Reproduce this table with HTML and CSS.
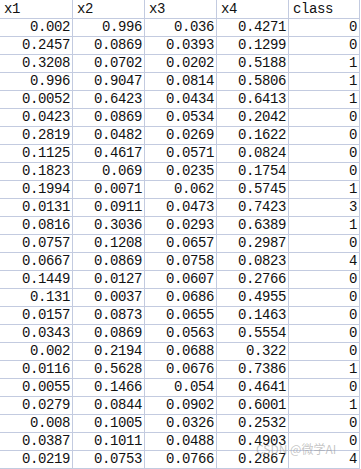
FILE: index.html
```html
<!DOCTYPE html>
<html>
<head>
<meta charset="utf-8">
<link rel="stylesheet" href="styles.css">
</head>
<body>
<div class="sheet">
  <div class="grid">
    <div class="cell head">x1</div><div class="cell head">x2</div><div class="cell head">x3</div><div class="cell head">x4</div><div class="cell head">class</div>
    <div class="cell">0.002</div><div class="cell">0.996</div><div class="cell">0.036</div><div class="cell">0.4271</div><div class="cell">0</div>
    <div class="cell">0.2457</div><div class="cell">0.0869</div><div class="cell">0.0393</div><div class="cell">0.1299</div><div class="cell">0</div>
    <div class="cell">0.3208</div><div class="cell">0.0702</div><div class="cell">0.0202</div><div class="cell">0.5188</div><div class="cell">1</div>
    <div class="cell">0.996</div><div class="cell">0.9047</div><div class="cell">0.0814</div><div class="cell">0.5806</div><div class="cell">1</div>
    <div class="cell">0.0052</div><div class="cell">0.6423</div><div class="cell">0.0434</div><div class="cell">0.6413</div><div class="cell">1</div>
    <div class="cell">0.0423</div><div class="cell">0.0869</div><div class="cell">0.0534</div><div class="cell">0.2042</div><div class="cell">0</div>
    <div class="cell">0.2819</div><div class="cell">0.0482</div><div class="cell">0.0269</div><div class="cell">0.1622</div><div class="cell">0</div>
    <div class="cell">0.1125</div><div class="cell">0.4617</div><div class="cell">0.0571</div><div class="cell">0.0824</div><div class="cell">0</div>
    <div class="cell">0.1823</div><div class="cell">0.069</div><div class="cell">0.0235</div><div class="cell">0.1754</div><div class="cell">0</div>
    <div class="cell">0.1994</div><div class="cell">0.0071</div><div class="cell">0.062</div><div class="cell">0.5745</div><div class="cell">1</div>
    <div class="cell">0.0131</div><div class="cell">0.0911</div><div class="cell">0.0473</div><div class="cell">0.7423</div><div class="cell">3</div>
    <div class="cell">0.0816</div><div class="cell">0.3036</div><div class="cell">0.0293</div><div class="cell">0.6389</div><div class="cell">1</div>
    <div class="cell">0.0757</div><div class="cell">0.1208</div><div class="cell">0.0657</div><div class="cell">0.2987</div><div class="cell">0</div>
    <div class="cell">0.0667</div><div class="cell">0.0869</div><div class="cell">0.0758</div><div class="cell">0.0823</div><div class="cell">4</div>
    <div class="cell">0.1449</div><div class="cell">0.0127</div><div class="cell">0.0607</div><div class="cell">0.2766</div><div class="cell">0</div>
    <div class="cell">0.131</div><div class="cell">0.0037</div><div class="cell">0.0686</div><div class="cell">0.4955</div><div class="cell">0</div>
    <div class="cell">0.0157</div><div class="cell">0.0873</div><div class="cell">0.0655</div><div class="cell">0.1463</div><div class="cell">0</div>
    <div class="cell">0.0343</div><div class="cell">0.0869</div><div class="cell">0.0563</div><div class="cell">0.5554</div><div class="cell">0</div>
    <div class="cell">0.002</div><div class="cell">0.2194</div><div class="cell">0.0688</div><div class="cell">0.322</div><div class="cell">0</div>
    <div class="cell">0.0116</div><div class="cell">0.5628</div><div class="cell">0.0676</div><div class="cell">0.7386</div><div class="cell">1</div>
    <div class="cell">0.0055</div><div class="cell">0.1466</div><div class="cell">0.054</div><div class="cell">0.4641</div><div class="cell">0</div>
    <div class="cell">0.0279</div><div class="cell">0.0844</div><div class="cell">0.0902</div><div class="cell">0.6001</div><div class="cell">1</div>
    <div class="cell">0.008</div><div class="cell">0.1005</div><div class="cell">0.0326</div><div class="cell">0.2532</div><div class="cell">0</div>
    <div class="cell">0.0387</div><div class="cell">0.1011</div><div class="cell">0.0488</div><div class="cell">0.4903</div><div class="cell">0</div>
    <div class="cell">0.0219</div><div class="cell">0.0753</div><div class="cell">0.0766</div><div class="cell">0.2867</div><div class="cell">4</div>
  </div>
  <div class="watermark">CSDN @微学AI</div>
</div>
</body>
</html>
```

FILE: styles.css
```css
html, body {
  margin: 0;
  padding: 0;
  background: #ffffff;
}

.sheet {
  position: relative;
  width: 361px;
  height: 469px;
  overflow: hidden;
}

.grid {
  display: grid;
  grid-template-columns: 73px 72px 72px 72px 71px;
  grid-template-rows: 19px repeat(25, 18px);
  font-family: "Liberation Mono", "Noto Sans CJK SC", monospace;
  font-size: 14px;
  letter-spacing: -0.4px;
  color: #111111;
}

.cell {
  box-sizing: border-box;
  border-right: 1px solid #c3cbe0;
  border-bottom: 1px solid #c3cbe0;
  display: flex;
  align-items: flex-end;
  justify-content: flex-end;
  padding: 0 2px 1px 0;
  line-height: 16px;
  white-space: nowrap;
}

.cell.head {
  justify-content: flex-start;
  padding: 0 0 1px 4px;
}

.watermark {
  position: absolute;
  left: 256px;
  top: 441px;
  font-family: "Noto Sans CJK SC", "Noto Sans", sans-serif;
  font-size: 12px;
  line-height: 16px;
  color: rgba(150, 150, 150, 0.55);
  white-space: nowrap;
}
```
